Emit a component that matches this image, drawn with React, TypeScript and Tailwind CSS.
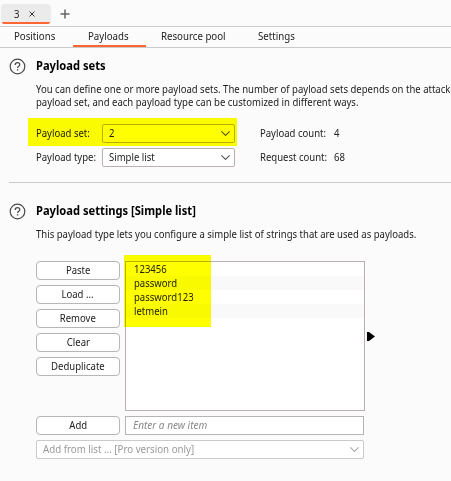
import React from 'react';

const widths = {
  body: 'inline-block origin-left -translate-y-px scale-x-[0.867]',
  tab: 'inline-block origin-left -translate-y-px scale-x-[0.88]',
  center: 'inline-block origin-center -translate-y-px scale-x-[0.867]',
  heading: 'inline-block origin-left scale-x-[0.93]',
  disabled: 'inline-block origin-left -translate-y-px scale-x-[0.883]',
  placeholder: 'inline-block origin-left -translate-y-px scale-x-[0.91]',
};

// The interface font is slightly condensed, so each label is narrowed.
function Label({ children, kind = 'body' }: { children: React.ReactNode; kind?: keyof typeof widths }) {
  return <span className={widths[kind]}>{children}</span>;
}

function HelpIcon() {
  return (
    <svg className="mt-[7px] h-[17px] w-[17px] shrink-0" viewBox="0 0 17 17" fill="none" stroke="#4a4a4a">
      <circle cx="8.5" cy="8.5" r="7.3" strokeWidth="1.2" />
      <path d="M6.2 6.9C6.2 5.5 7.2 4.7 8.5 4.7S10.8 5.5 10.8 6.7C10.8 8.2 8.6 8.2 8.6 10" strokeWidth="1.2" />
      <path d="M8.6 11.2V12.5" strokeWidth="1.4" />
    </svg>
  );
}

function Chevron({ color }: { color: string }) {
  return (
    <svg className="h-[5px] w-[9px] shrink-0" viewBox="0 0 9 5" fill="none" stroke={color}>
      <path d="M0.4 0.4L4.5 4.4L8.6 0.4" strokeWidth="1.1" />
    </svg>
  );
}

function Select({ value }: { value: string }) {
  return (
    <div className="flex h-[19px] w-[133px] items-center justify-between rounded-[2px] border border-[#b9b0b4] bg-white pr-[4px] pl-[6px]">
      <Label>{value}</Label>
      <Chevron color="#555555" />
    </div>
  );
}

function Button({ label }: { label: string }) {
  return (
    <button className="flex h-[19px] w-[84px] shrink-0 items-center justify-center rounded-[4px] border border-[#b9b4b6] bg-white">
      <Label kind="center">{label}</Label>
    </button>
  );
}

const actions = ['Paste', 'Load ...', 'Remove', 'Clear', 'Deduplicate'];
const payloads = ['123456', 'password', 'password123', 'letmein'];

export default function App() {
  return (
    <div className="h-[481px] w-[451px] overflow-hidden bg-[#fbfbfb] font-['Noto_Sans',sans-serif] text-[11px] leading-[13px] whitespace-nowrap text-[#222222]">
      <div className="flex h-[27px] items-start border-b border-[#cacaca] pt-[4px] pl-[1px]">
        <div className="relative flex h-[20px] w-[50px] items-center rounded-[4px] bg-[#ebebeb] pl-[13px]">
          <span className="w-[15px]"><Label>3</Label></span>
          <svg className="h-[6px] w-[6px]" viewBox="0 0 6 6" stroke="#222222">
            <path d="M0.5 0.5L5.5 5.5M5.5 0.5L0.5 5.5" strokeWidth="0.9" />
          </svg>
          <div className="absolute bottom-0 left-[1px] h-[2px] w-[48px] rounded-b-[2px] bg-[#ff6633]" />
        </div>
        <svg className="mt-[5px] ml-[9px] h-[10px] w-[10px]" viewBox="0 0 10 10" stroke="#666666">
          <path d="M5 0.5V9.5M0.5 5H9.5" strokeWidth="1.5" />
        </svg>
      </div>

      <div className="flex h-[21px] border-b border-[#cacaca]">
        <div className="w-[73px] pt-[3px] pl-[14px]"><Label kind="tab">Positions</Label></div>
        <div className="w-[73px] border-b-2 border-[#ff6633] pt-[3px] pl-[15px]"><Label kind="tab">Payloads</Label></div>
        <div className="w-[97px] pt-[3px] pl-[15px]"><Label kind="tab">Resource pool</Label></div>
        <div className="pt-[3px] pl-[15px]"><Label kind="tab">Settings</Label></div>
      </div>

      <section className="relative ml-[9px] flex h-[135px] border-b border-[#cacaca] pt-[3px]">
        <HelpIcon />
        <div className="ml-[10px]">
          <h2 className="mt-[7px] h-[25px] text-[12px] leading-[16px] font-bold text-black"><Label kind="heading">Payload sets</Label></h2>
          <p className="h-[13px]"><Label>You can define one or more payload sets. The number of payload sets depends on the attack</Label></p>
          <p className="h-[13px]"><Label>payload set, and each payload type can be customized in different ways.</Label></p>
          <div className="mt-[15px] flex h-[19px] items-center">
            <span className="w-[66px]"><Label>Payload set:</Label></span>
            <Select value="2" />
            <span className="ml-[25px] w-[74px]"><Label>Payload count:</Label></span>
            <Label>4</Label>
          </div>
          <div className="mt-[5px] flex h-[19px] items-center">
            <span className="w-[66px]"><Label>Payload type:</Label></span>
            <Select value="Simple list" />
            <span className="ml-[25px] w-[74px]"><Label>Request count:</Label></span>
            <Label>68</Label>
          </div>
        </div>
        <div className="absolute top-[70px] left-[19px] h-[28px] w-[209px] bg-[#ffff00] mix-blend-multiply" />
      </section>

      <section className="relative ml-[9px] flex pt-[13px]">
        <HelpIcon />
        <div className="ml-[10px]">
          <h2 className="mt-[7px] h-[25px] text-[12px] leading-[16px] font-bold text-black"><Label kind="heading">Payload settings [Simple list]</Label></h2>
          <p className="h-[13px]"><Label>This payload type lets you configure a simple list of strings that are used as payloads.</Label></p>
          <div className="mt-[20px] flex">
            <div className="flex w-[89px] flex-col gap-[5px]">
              {actions.map((a) => (
                <Button key={a} label={a} />
              ))}
            </div>
            <div className="h-[150px] w-[240px] border border-[#b9b0b4] bg-white">
              {payloads.map((p, i) => (
                <div key={p} className={'h-[14px] pl-[8px] leading-[15px] ' + (i % 2 ? 'bg-[#f9f9f9]' : 'bg-white')}>
                  <Label>{p}</Label>
                </div>
              ))}
            </div>
            <svg className="mt-[71px] ml-[2px] h-[9px] w-[8px]" viewBox="0 0 8 9">
              <path d="M0 0H2L8 4.5L2 9H0Z" fill="#000000" />
            </svg>
          </div>
          <div className="mt-[5px] flex gap-[5px]">
            <Button label="Add" />
            <div className="flex h-[19px] w-[239px] items-center border border-[#b4b4b4] bg-white pl-[7px] text-[#888888] italic"><Label kind="placeholder">Enter a new item</Label></div>
          </div>
          <div className="mt-[5px] flex h-[19px] w-[328px] items-center justify-between rounded-[2px] border border-[#cacaca] bg-white pr-[4px] pl-[6px] text-[#999999]">
            <Label kind="disabled">Add from list ... [Pro version only]</Label>
            <Chevron color="#aaaaaa" />
          </div>
        </div>
        <div className="absolute top-[72px] left-[115px] h-[72px] w-[87px] bg-[#ffff00] mix-blend-multiply" />
      </section>
    </div>
  );
}
